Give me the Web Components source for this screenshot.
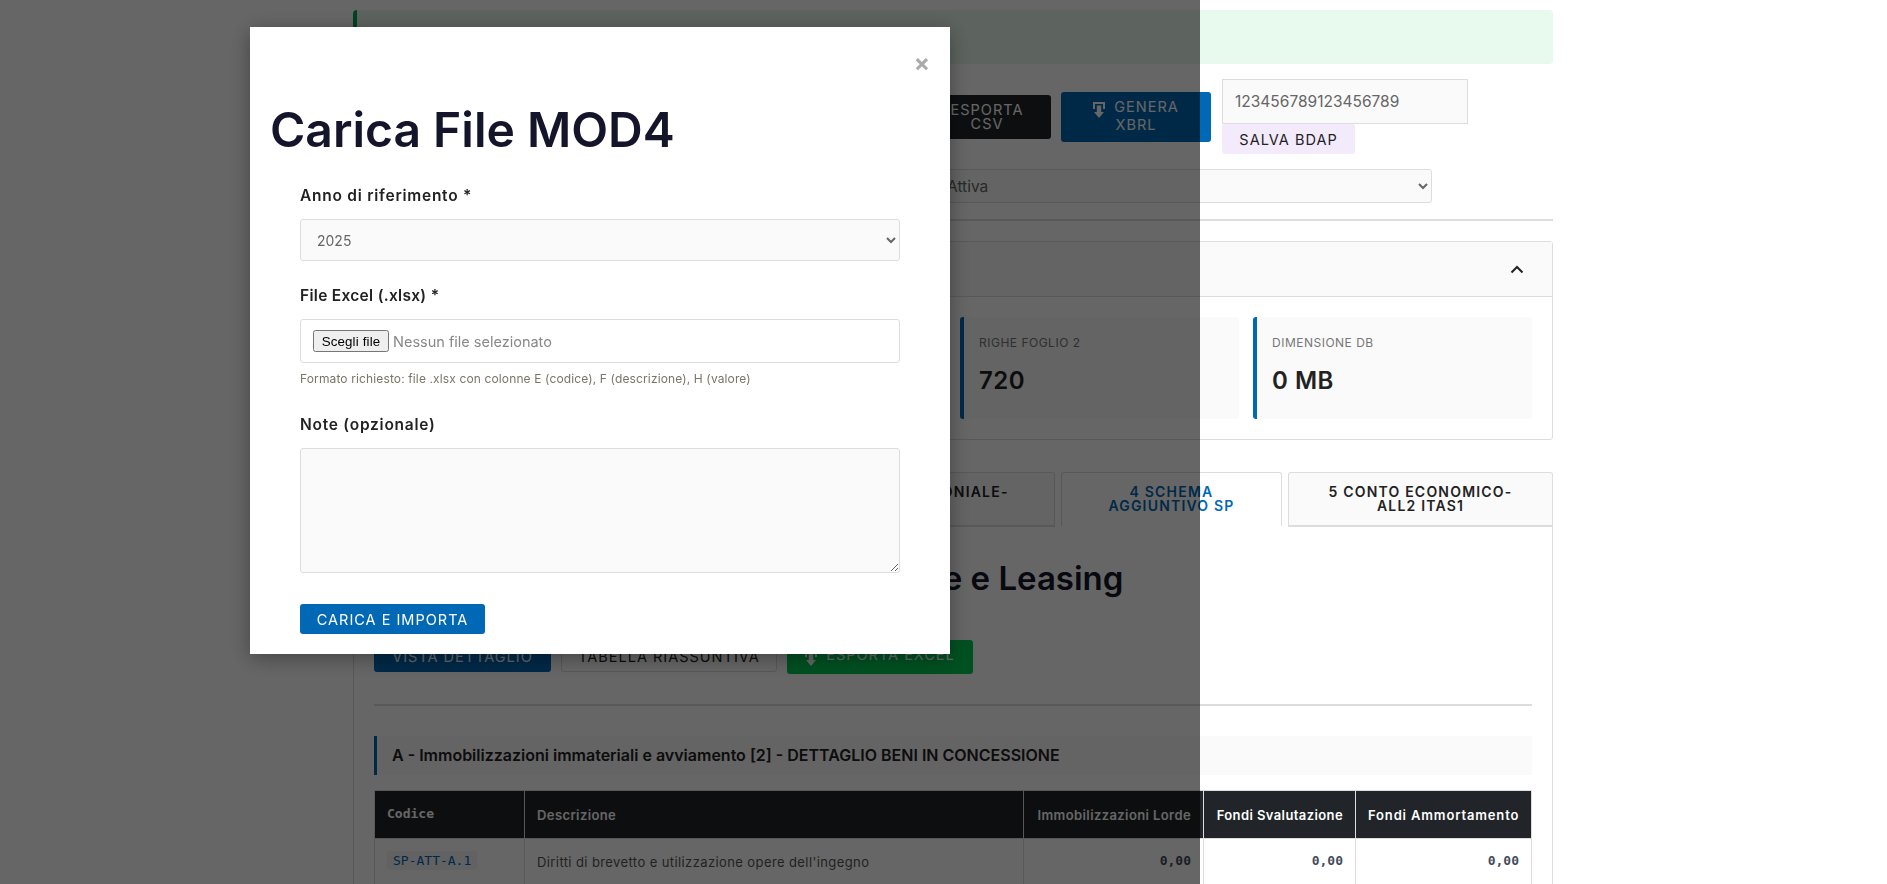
<!DOCTYPE html>
<html lang="it">
<head>
<meta charset="utf-8">
<title>Carica File MOD4</title>
<style>
  html, body { margin: 0; height: 100%; overflow: hidden; background: #fff; }
  body { font-family: Inter, "Liberation Sans", sans-serif; color: #222; }
</style>
</head>
<body>
<app-shell>
  <status-alert></status-alert>

  <tool-bar>
    <action-btn kind="dark" style="width:128px">ESPORTA<br>CSV</action-btn>
    <action-btn kind="blue" icon style="width:150px;padding-bottom:10px">GENERA<br>XBRL</action-btn>
    <bdap-form value="123456789123456789"></bdap-form>
  </tool-bar>

  <scope-select text="Attiva"></scope-select>

  <stat-panel>
    <stat-card></stat-card>
    <stat-card></stat-card>
    <stat-card label="Righe Foglio 2" value="720"></stat-card>
    <stat-card label="Dimensione DB" value="0 MB"></stat-card>
  </stat-panel>

  <tab-bar>
    <tab-item style="width:290px">3 STATO PATRIMONIALE-<br>ALL1 ITAS1</tab-item>
    <tab-item active style="width:221px">4 SCHEMA<br>AGGIUNTIVO SP</tab-item>
    <tab-item style="width:265px">5 CONTO ECONOMICO-<br>ALL2 ITAS1</tab-item>
  </tab-bar>

  <tab-panel>
    <page-heading>Schema Aggiuntivo SP: Concessione e Leasing</page-heading>
    <view-actions>
      <action-btn kind="blue" style="width:177px">VISTA DETTAGLIO</action-btn>
      <action-btn kind="plain" style="width:216px">TABELLA RIASSUNTIVA</action-btn>
      <action-btn kind="green" icon style="width:186px">ESPORTA EXCEL</action-btn>
    </view-actions>
    <section-title>A - Immobilizzazioni immateriali e avviamento [2] - DETTAGLIO BENI IN CONCESSIONE</section-title>
    <schema-table></schema-table>
  </tab-panel>
</app-shell>

<upload-modal></upload-modal>

<script>
/**
 * Page container, 1200px wide, the top of it touches the alert
 *
 * @class AppShell
 * @extends {HTMLElement}
 */
class AppShell extends HTMLElement {
  constructor() {
    super();
    this._shadowRoot = this.attachShadow({ mode: "open" });
    this._shadowRoot.innerHTML = `
      <style>
        :host { display: block; width: 1200px; margin-left: 353px; padding-top: 10px; }
      </style>
      <slot></slot>`;
  }
}
customElements.define("app-shell", AppShell);

class StatusAlert extends HTMLElement {
  constructor() {
    super();
    this._shadowRoot = this.attachShadow({ mode: "open" });
    this._shadowRoot.innerHTML = `
      <style>
        :host {
          display: block; height: 54px; box-sizing: border-box;
          background: #e8f9ee; border-left: 4px solid #00a651; border-radius: 4px;
        }
      </style>
      <slot></slot>`;
  }
}
customElements.define("status-alert", StatusAlert);

class ToolBar extends HTMLElement {
  constructor() {
    super();
    this._shadowRoot = this.attachShadow({ mode: "open" });
    this._shadowRoot.innerHTML = `
      <style>
        :host { display: flex; align-items: center; gap: 10px; margin: 15px 0 0 570px; }
        ::slotted(bdap-form) { margin-left: 1px; }
      </style>
      <slot></slot>`;
  }
}
customElements.define("tool-bar", ToolBar);

/**
 * Button with four colours, icon attribute shows the download glyph
 *
 * @class ActionBtn
 * @extends {HTMLElement}
 */
class ActionBtn extends HTMLElement {
  constructor() {
    super();
    this._shadowRoot = this.attachShadow({ mode: "open" });
    this._shadowRoot.innerHTML = `
      <style>
        :host {
          display: inline-block; box-sizing: border-box; padding: 8px 10px;
          border-radius: 3px; text-align: center; font-size: 14.5px; font-weight: 400;
          line-height: 14px; letter-spacing: 1px; color: #fff; background: #0068b4;
        }
        :host([kind="dark"]) { background: #212529; }
        :host([kind="green"]) { background: #00c853; }
        :host([kind="plain"]) { background: #fff; color: #222; border: 1px solid #ddd; padding: 7px 10px; }
        svg { display: none; width: 12px; height: 16px; vertical-align: -6px; margin-right: 9px; }
        :host([icon]) svg { display: inline-block; }
      </style>
      <svg viewBox="0 0 12 16" fill="currentColor">
        <path d="M0 0h12v7h-2V2H2v5H0z"/>
        <path d="M3.800 3.500h4.400V10H11l-5 6-5-6h2.800z"/>
      </svg><slot></slot>`;
  }
}
customElements.define("action-btn", ActionBtn);

class BdapForm extends HTMLElement {
  constructor() {
    super();
    this._shadowRoot = this.attachShadow({ mode: "open" });
    this._shadowRoot.innerHTML = `
      <style>
        :host { display: block; width: 246px; }
        input {
          display: block; box-sizing: border-box; width: 100%; height: 45px; padding: 0 12px;
          font: 15.5px Inter, sans-serif; color: #666; background: #fafafa; border: 1px solid #ddd;
        }
        button {
          display: block; box-sizing: border-box; width: 133px; height: 30px; padding: 0;
          font: 14.5px Inter, sans-serif; letter-spacing: 1px; color: #222;
          background: #f3ebfc; border: 0; border-radius: 3px;
        }
      </style>
      <input type="text"><button>SALVA BDAP</button>`;
    this._shadowRoot.querySelector("input").value = this.getAttribute("value");
  }
}
customElements.define("bdap-form", BdapForm);

class ScopeSelect extends HTMLElement {
  constructor() {
    super();
    this._shadowRoot = this.attachShadow({ mode: "open" });
    this._shadowRoot.innerHTML = `
      <style>
        :host { display: block; margin-top: 15px; padding-bottom: 16px; border-bottom: 2px solid #ddd; }
        select {
          display: block; box-sizing: border-box; width: 500px; height: 34px; margin-left: 579px;
          padding: 0 10px; font: 15.5px Inter, sans-serif; color: #666;
          background: #fafafa; border: 1px solid #ddd; border-radius: 3px;
        }
      </style>
      <select><option>${this.getAttribute("text")}</option></select>`;
  }
}
customElements.define("scope-select", ScopeSelect);

/**
 * Collapsible box around the stat cards
 *
 * @class StatPanel
 * @extends {HTMLElement}
 */
class StatPanel extends HTMLElement {
  constructor() {
    super();
    this._shadowRoot = this.attachShadow({ mode: "open" });
    this._shadowRoot.innerHTML = `
      <style>
        :host {
          display: block; box-sizing: border-box; margin-top: 20px;
          border: 1px solid #ddd; border-radius: 3px;
        }
        .head {
          display: flex; align-items: center; justify-content: flex-end; height: 54px;
          padding-right: 28px; background: #fafafa; border-bottom: 1px solid #ddd;
        }
        svg { width: 14px; height: 9px; }
        .body { display: grid; grid-template-columns: repeat(4, 279px); gap: 14px; padding: 20px 20px 20px; }
      </style>
      <div class="head">
        <svg viewBox="0 0 14 9" fill="none" stroke="#222" stroke-width="2"><path d="M1.500 7.500L7 2l5.500 5.500"/></svg>
      </div>
      <div class="body"><slot></slot></div>`;
  }
}
customElements.define("stat-panel", StatPanel);

class StatCard extends HTMLElement {
  constructor() {
    super();
    this._shadowRoot = this.attachShadow({ mode: "open" });
    this._shadowRoot.innerHTML = `
      <style>
        :host {
          display: block; box-sizing: border-box; height: 102px; padding: 19px 15px 0;
          background: #fafafa; border-left: 4px solid #0068b4; border-radius: 3px;
        }
        .label { height: 14px; font-size: 12px; line-height: 14px; letter-spacing: .5px; color: #777; text-transform: uppercase; }
        .value { margin-top: 16px; font-size: 24px; line-height: 30px; letter-spacing: .5px; font-weight: 600; color: #222; }
      </style>
      <div class="label">${this.getAttribute("label") || ""}</div>
      <div class="value">${this.getAttribute("value") || ""}</div>`;
  }
}
customElements.define("stat-card", StatCard);

class TabBar extends HTMLElement {
  constructor() {
    super();
    this._shadowRoot = this.attachShadow({ mode: "open" });
    this._shadowRoot.innerHTML = `
      <style>
        :host { display: flex; justify-content: flex-end; gap: 6px; margin-top: 32px; height: 55px; }
      </style>
      <slot></slot>`;
  }
}
customElements.define("tab-bar", TabBar);

class TabItem extends HTMLElement {
  constructor() {
    super();
    this._shadowRoot = this.attachShadow({ mode: "open" });
    this._shadowRoot.innerHTML = `
      <style>
        :host {
          display: flex; align-items: center; justify-content: center; box-sizing: border-box;
          text-align: center; font-size: 14px; line-height: 14px;
          font-weight: 600; letter-spacing: 1.2px; color: #222; background: #fafafa;
          border: 1px solid #ddd; border-bottom-width: 2px; border-radius: 3px 3px 0 0;
        }
        :host([active]) { color: #0068b4; background: #fff; border-bottom-color: #fff; }
      </style>
      <div><slot></slot></div>`;
  }
}
customElements.define("tab-item", TabItem);

class TabPanel extends HTMLElement {
  constructor() {
    super();
    this._shadowRoot = this.attachShadow({ mode: "open" });
    this._shadowRoot.innerHTML = `
      <style>
        :host {
          display: block; box-sizing: border-box; height: 400px; padding: 0 20px;
          border-left: 1px solid #ddd; border-right: 1px solid #ddd;
        }
      </style>
      <slot></slot>`;
  }
}
customElements.define("tab-panel", TabPanel);

class PageHeading extends HTMLElement {
  constructor() {
    super();
    this._shadowRoot = this.attachShadow({ mode: "open" });
    this._shadowRoot.innerHTML = `
      <style>
        :host {
          display: block; padding-top: 32px; font-size: 33px; line-height: 38px;
          font-weight: 600; color: #14142b; white-space: nowrap;
        }
      </style>
      <slot></slot>`;
  }
}
customElements.define("page-heading", PageHeading);

class ViewActions extends HTMLElement {
  constructor() {
    super();
    this._shadowRoot = this.attachShadow({ mode: "open" });
    this._shadowRoot.innerHTML = `
      <style>
        :host {
          display: flex; align-items: center; gap: 10px; margin-top: 43px;
          padding-bottom: 30px; border-bottom: 2px solid #ddd;
        }
      </style>
      <slot></slot>`;
  }
}
customElements.define("view-actions", ViewActions);

class SectionTitle extends HTMLElement {
  constructor() {
    super();
    this._shadowRoot = this.attachShadow({ mode: "open" });
    this._shadowRoot.innerHTML = `
      <style>
        :host {
          display: block; box-sizing: border-box; height: 39px; margin-top: 30px; padding-left: 15px;
          font-size: 16px; line-height: 39px; font-weight: 600; color: #222; white-space: nowrap;
          background: #fafafa; border-left: 3px solid #0068b4;
        }
      </style>
      <slot></slot>`;
  }
}
customElements.define("section-title", SectionTitle);

/**
 * Dark header table of the schema, first row only fits in the window
 *
 * @class SchemaTable
 * @extends {HTMLElement}
 */
class SchemaTable extends HTMLElement {
  constructor() {
    super();
    this._shadowRoot = this.attachShadow({ mode: "open" });
    this._shadowRoot.innerHTML = `
      <style>
        :host { display: block; margin-top: 15px; }
        table { width: 1157px; border-collapse: collapse; table-layout: fixed; font-size: 13px; }
        th, td { padding: 0 12px; border: 1px solid #ddd; }
        th {
          height: 48px; box-sizing: border-box; text-align: left; font-weight: 600; white-space: nowrap;
          letter-spacing: .4px; color: #fff; background: #212529;
        }
        td { height: 46px; box-sizing: border-box; color: #555; letter-spacing: .4px; }
        .num { text-align: right; }
        th.wide { letter-spacing: .85px; }
        th.code { font: bold 13px "DejaVu Sans Mono", monospace; letter-spacing: 0; padding-bottom: 3px; }
        td.val { text-align: right; font: bold 13px "DejaVu Sans Mono", monospace; letter-spacing: 0; color: #444c5c; padding-bottom: 2px; }
        code {
          display: inline-block; padding: 2px 6px; margin-bottom: 2px; letter-spacing: 0;
          font: 13px "DejaVu Sans Mono", monospace; color: #0068b4; background: #f5f5f5; border-radius: 2px;
        }
      </style>
      <table>
        <colgroup><col style="width:150px"><col style="width:499px"><col style="width:180px"><col style="width:152px"><col style="width:176px"></colgroup>
        <tr>
          <th class="code">Codice</th><th>Descrizione</th>
          <th class="num">Immobilizzazioni Lorde</th><th class="num">Fondi Svalutazione</th><th class="num wide">Fondi Ammortamento</th>
        </tr>
        <tr>
          <td><code>SP-ATT-A.1</code></td><td>Diritti di brevetto e utilizzazione opere dell'ingegno</td>
          <td class="val">0,00</td><td class="val">0,00</td><td class="val">0,00</td>
        </tr>
      </table>`;
  }
}
customElements.define("schema-table", SchemaTable);

class FormField extends HTMLElement {
  constructor() {
    super();
    this._shadowRoot = this.attachShadow({ mode: "open" });
    this._shadowRoot.innerHTML = `
      <style>
        :host { display: block; }
        label {
          display: block; margin-bottom: 13px; font-size: 15.5px; line-height: 20px;
          letter-spacing: var(--label-spacing, .75px); font-weight: 600; color: #222;
        }
      </style>
      <label>${this.getAttribute("label")}</label>
      <slot></slot>`;
  }
}
customElements.define("form-field", FormField);

/**
 * Backdrop and dialog for the MOD4 upload
 *
 * @class UploadModal
 * @extends {HTMLElement}
 */
class UploadModal extends HTMLElement {
  constructor() {
    super();
    this._shadowRoot = this.attachShadow({ mode: "open" });
    this._shadowRoot.innerHTML = `
      <style>
        :host {
          display: block; position: fixed; top: 0; left: 0; width: 1200px; height: 100%;
          background: rgba(0, 0, 0, .6);
        }
        .dialog {
          position: relative; box-sizing: border-box; width: 700px; height: 627px; margin: 27px auto 0;
          padding: 74px 50px 0; background: #fff; box-shadow: 0 4px 20px rgba(0, 0, 0, .35);
        }
        .close {
          position: absolute; top: 22px; right: 20px; font-size: 24px; line-height: 28px;
          font-weight: 700; color: #aaa;
        }
        h1 {
          margin: 0 0 0 -30px; font-size: 48px; line-height: 58px; font-weight: 600;
          color: #14142b; white-space: nowrap;
        }
        form-field { margin-top: 25px; }
        h1 + form-field { margin-top: 27px; }
        .excel { --label-spacing: .3px; }
        select, textarea, .file {
          display: block; box-sizing: border-box; width: 100%;
          font: 14px Inter, sans-serif; color: #666; border: 1px solid #ddd; border-radius: 3px;
        }
        select { height: 42px; padding: 0 12px; background: #fafafa; }
        textarea { height: 125px; background: #fafafa; }
        .file { display: flex; align-items: center; height: 44px; padding: 0 12px; background: #fff; color: #888; }
        .file span { font-size: 14.500px; }
        .file button {
          box-sizing: border-box; width: 76px; margin-right: 4px; padding: 1px 0; height: 22px;
          font: 13.33px "Liberation Sans", Arial, sans-serif; letter-spacing: .15px;
        }
        .hint { margin-top: 9px; font-size: 12px; line-height: 14px; letter-spacing: .13px; color: #7a7566; }
        form-field.note { margin-top: 29px; }
        .submit {
          display: block; box-sizing: border-box; width: 185px; height: 30px; margin-top: 31px; padding: 0;
          font: 14.5px Inter, sans-serif; letter-spacing: 1px; color: #fff;
          background: #0068b4; border: 0; border-radius: 3px;
        }
      </style>
      <div class="dialog">
        <span class="close">×</span>
        <h1>Carica File MOD4</h1>
        <form-field label="Anno di riferimento *">
          <select><option>2025</option></select>
        </form-field>
        <form-field class="excel" label="File Excel (.xlsx) *">
          <div class="file"><button type="button">Scegli file</button><span>Nessun file selezionato</span></div>
          <div class="hint">Formato richiesto: file .xlsx con colonne E (codice), F (descrizione), H (valore)</div>
        </form-field>
        <form-field class="note" label="Note (opzionale)">
          <textarea></textarea>
        </form-field>
        <button class="submit" type="button">CARICA E IMPORTA</button>
      </div>`;
  }
}
customElements.define("upload-modal", UploadModal);
</script>
</body>
</html>
